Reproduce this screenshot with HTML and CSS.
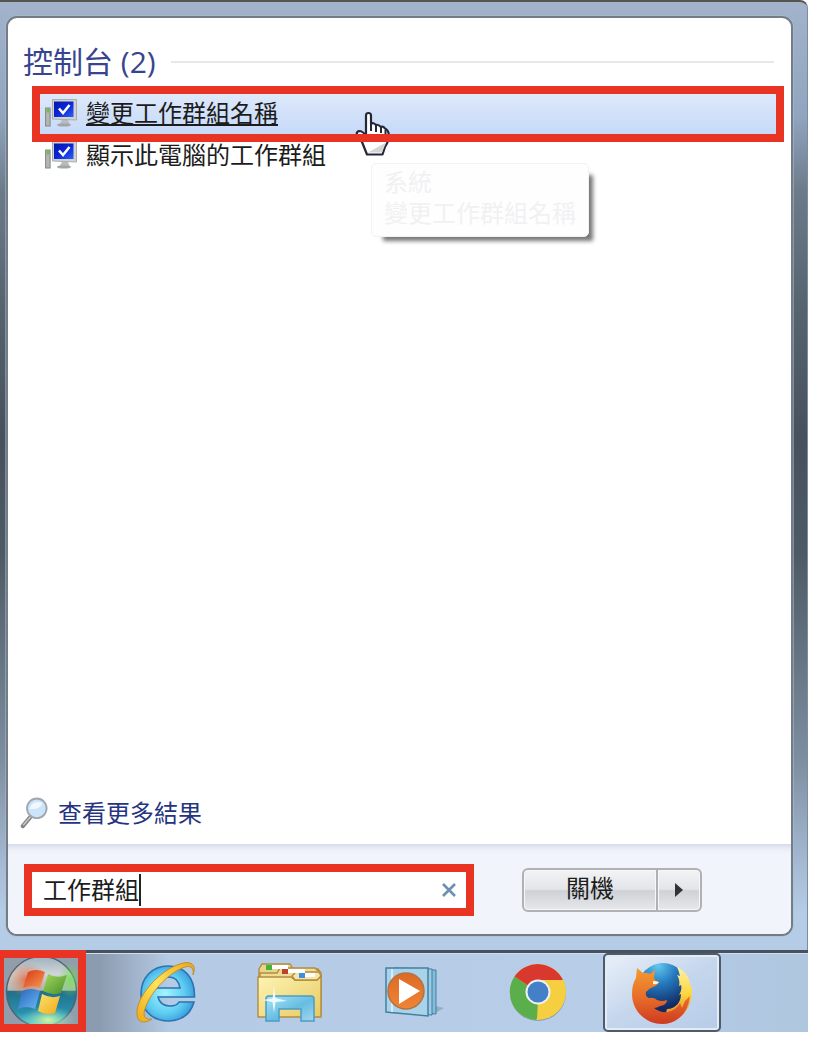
FILE: index.html
```html
<!DOCTYPE html>
<html lang="zh-Hant">
<head>
<meta charset="utf-8">
<meta name="viewport" content="width=device-width, initial-scale=1">
<title>控制台</title>
<link rel="stylesheet" href="styles.css">
</head>
<body>
<svg class="defs" width="0" height="0" aria-hidden="true">
  <defs>
    <linearGradient id="screen" x1="0" y1="0" x2="1" y2="1"><stop offset="0" stop-color="#0419a8"/><stop offset=".5" stop-color="#0a25d8"/><stop offset="1" stop-color="#2e62f2"/></linearGradient>
    <symbol id="computer" viewBox="0 0 32 28">
      <rect x=".6" y="9" width="4.500" height="18" fill="#b5b5b5" stroke="#858585"/>
      <rect x="1.500" y="10" width="2.800" height="3.500" fill="#62c83c"/>
      <path d="M17 21h6l2 5H14z" fill="#b9bcbd"/>
      <ellipse cx="19" cy="26" rx="7" ry="1.600" fill="#a2a5a6"/>
      <path d="M7.500 .5H31.500v20.500L7.500 20z" fill="#d0d3d2" stroke="#a9adae"/>
      <path d="M9 2.500H28.500v15.500H9z" fill="url(#screen)"/>
      <path d="M14 9.500l4 4.500L24.500 6" fill="none" stroke="#fff" stroke-width="2.500"/>
    </symbol>
  </defs>
</svg>
<div class="desktop">
  <main class="menu">
    <div class="panel">
      <section class="results">
        <h1 class="heading">控制台 (2)</h1>
        <ul class="list">
          <li class="item item-active">
            <a class="entry" href="#"><svg class="pc" aria-hidden="true"><use href="#computer"/></svg><span>變更工作群組名稱</span></a>
            <svg class="cursor" viewBox="0 0 36 46" aria-hidden="true">
              <path d="M11 25V4.500Q11 2 13.500 2T16 4.500V13q2-2 5 1 2-1 5 2 2-1 4 1.500 3 1 4 6.500 0 6-4 12l-2.500 7.500H12L7 31 2 24q-1-3 2-4 4 0 7 5z" fill="#fff" stroke="#252838" stroke-width="2.200" stroke-linejoin="round"/>
              <path d="M16 12v8M21 14v7M26 16v6M30.500 19v5" stroke="#252838" stroke-width="2"/>
              <path d="M13 41.500h14l4-10z" fill="#d5d5d5"/>
            </svg>
            <div class="tip" role="tooltip"><div>系統</div><div>變更工作群組名稱</div></div>
          </li>
          <li class="item">
            <a class="entry" href="#"><svg class="pc" aria-hidden="true"><use href="#computer"/></svg><span>顯示此電腦的工作群組</span></a>
          </li>
        </ul>
        <a class="more" href="#">
          <svg class="lens" viewBox="0 0 30 34" aria-hidden="true">
            <path d="M3 31L13 19" stroke="#858585" stroke-width="4.500" stroke-linecap="round"/>
            <path d="M3.500 30L13 19" stroke="#ccc" stroke-width="1.600"/>
            <circle cx="18" cy="12" r="10.500" fill="#cce4f9" stroke="#a1a7ad" stroke-width="2"/>
            <path d="M10 13q3-10 14-7-1 7-14 7z" fill="#f0f8ff"/>
          </svg>
          <span>查看更多結果</span>
        </a>
      </section>
      <footer class="foot">
        <form class="search">
          <input class="query" type="text" value="工作群組" aria-label="搜尋">
          <span class="caret"></span>
          <button class="clear" type="reset" aria-label="清除">
            <svg viewBox="0 0 16 16" width="16" height="16"><path d="M2 2l12 12M14 2L2 14" stroke="#6d8fb2" stroke-width="2.600"/></svg>
          </button>
        </form>
        <div class="power">
          <button class="shut" type="button">關機</button>
          <button class="arrow" type="button" aria-label="更多選項"><svg viewBox="0 0 8 14" width="8" height="14"><path d="M0 0l8 7-8 7z" fill="#333"/></svg></button>
        </div>
      </footer>
    </div>
  </main>
  <nav class="taskbar">
    <button class="start" type="button" aria-label="開始">
      <svg class="orb" viewBox="0 0 74 66" preserveAspectRatio="xMidYMid slice">
        <defs>
          <linearGradient id="orbTop" x1="0" y1="0" x2="0" y2="1"><stop offset="0" stop-color="#9db0be"/><stop offset=".25" stop-color="#d0d6d8"/><stop offset=".48" stop-color="#b0b9b4"/><stop offset=".5" stop-color="#216f8b"/><stop offset=".8" stop-color="#2990ad"/><stop offset="1" stop-color="#6cd4d8"/></linearGradient>
          <radialGradient id="orbWarm"><stop offset="0" stop-color="#e8562c"/><stop offset="1" stop-color="#e87b4c" stop-opacity="0"/></radialGradient>
          <radialGradient id="orbGreen"><stop offset="0" stop-color="#6be04a"/><stop offset="1" stop-color="#7ad45a" stop-opacity="0"/></radialGradient>
          <radialGradient id="orbGlow"><stop offset="0" stop-color="#d6f59c"/><stop offset="1" stop-color="#6fe0d0" stop-opacity="0"/></radialGradient>
          <linearGradient id="flagR" x1="0" y1="0" x2="1" y2="1"><stop offset="0" stop-color="#d8360f"/><stop offset="1" stop-color="#f79a58"/></linearGradient>
          <linearGradient id="flagG" x1="0" y1="0" x2="1" y2="1"><stop offset="0" stop-color="#a8d860"/><stop offset="1" stop-color="#44902a"/></linearGradient>
          <linearGradient id="flagB" x1="0" y1="0" x2="1" y2="1"><stop offset="0" stop-color="#2564bd"/><stop offset="1" stop-color="#6db9f2"/></linearGradient>
          <linearGradient id="flagY" x1="0" y1="0" x2="1" y2="1"><stop offset="0" stop-color="#fbe36c"/><stop offset="1" stop-color="#f2a91c"/></linearGradient>
        </defs>
        <rect width="74" height="66" fill="#929dab"/>
        <circle cx="37.500" cy="33.500" r="35" fill="url(#orbTop)" stroke="#4f6472" stroke-width="1.500"/>
        <ellipse cx="23" cy="22" rx="20" ry="18" fill="url(#orbWarm)" opacity=".8"/>
        <ellipse cx="66" cy="22" rx="12" ry="18" fill="url(#orbGreen)" opacity=".8"/>
        <ellipse cx="44" cy="62" rx="28" ry="14" fill="url(#orbGlow)"/>
        <path d="M24 14q8-4 17 0l-5 16q-8-4-17 0z" fill="url(#flagR)"/>
        <path d="M44 16q9 5 19 1l-6 18q-9 3-18-2z" fill="url(#flagG)"/>
        <path d="M18 33q9-4 18 0l-5 18q-9-4-17 0z" fill="url(#flagB)"/>
        <path d="M38 36q9 5 18 2l-5 17q-9 3-17-2z" fill="url(#flagY)"/>
      </svg>
    </button>
    <button class="app" type="button" aria-label="Internet Explorer">
      <svg viewBox="0 0 60 62" width="60" height="62">
        <defs><radialGradient id="ie" cx=".45" cy=".5" r=".6"><stop offset="0" stop-color="#a5f4fd"/><stop offset=".6" stop-color="#5fcdf2"/><stop offset="1" stop-color="#3294d6"/></radialGradient>
        <linearGradient id="ieRing" x1="0" y1="1" x2="1" y2="0"><stop offset="0" stop-color="#f0a91a"/><stop offset=".5" stop-color="#ffe45a"/><stop offset="1" stop-color="#eba51c"/></linearGradient></defs>
        <path fill-rule="evenodd" d="M32 5C48 5 59 16 58.500 36H22q2 9 12 9 7 0 9-4h15q-5 18-25 19C16 60 5 49 5 33S16 5 32 5zM21 27h23q-2-11-11-11-10 0-12 11z" fill="url(#ie)" stroke="#2a73b4" stroke-width="1.600"/>
        <path d="M57 14C61 4 55-1 44 3 24 9-1 36 1 54c1 9 9 8 15 4-8 1-10-3-6-13C17 28 34 11 49 6c7-2 9 2 8 8z" fill="url(#ieRing)" stroke="#bd902d" stroke-width="1"/>
      </svg>
    </button>
    <button class="app" type="button" aria-label="檔案總管">
      <svg viewBox="0 0 66 60" width="66" height="60">
        <defs><linearGradient id="folder" x1="0" y1="0" x2="1" y2="1"><stop offset="0" stop-color="#fdf4b5"/><stop offset="1" stop-color="#e7ca60"/></linearGradient>
        <linearGradient id="stand" x1="0" y1="0" x2="1" y2="1"><stop offset="0" stop-color="#a8e5f5"/><stop offset=".55" stop-color="#65bde2"/><stop offset="1" stop-color="#a5d6ed"/></linearGradient></defs>
        <g stroke="#b28c42" stroke-width="1.400">
          <path d="M2 54V7l3-5h28l3 5h25l3 4v42z" fill="#ead487"/>
          <path d="M3 54V11h17l3-5h35l4 4v43z" fill="#f0dc91"/>
          <path d="M1 55V15h33l4 3h22l4-4v41z" fill="url(#folder)"/>
          <path d="M35 14l4-4h23l2 4-4 4H38z" fill="#f5e6a5"/>
        </g>
        <path d="M9 3h22v4H9zM26 7h22v4H26zM42 11h16v4H42z" fill="#fff"/>
        <path d="M9 3h6v5H9z" fill="#38b83c"/><path d="M25 7h6v5h-6z" fill="#bd4130"/><path d="M42 11h6v5h-6z" fill="#3b8fdb"/>
        <path d="M9 59V37q0-3 3-3h42q3 0 3 3v22H44V47H22v12z" fill="url(#stand)" stroke="#4b9cc8" stroke-width="1.500"/>
        <path d="M17 24l1.500 12L30 39l-11.500 1L17 51l-1.500-11L5 38l10.500-1.500z" fill="#fff" opacity=".85"/>
      </svg>
    </button>
    <button class="app" type="button" aria-label="Windows Media Player">
      <svg viewBox="0 0 60 52" width="60" height="52">
        <defs><linearGradient id="play" x1="0" y1="0" x2="0" y2="1"><stop offset="0" stop-color="#dc6a26"/><stop offset="1" stop-color="#f18436"/></linearGradient></defs>
        <path d="M46 50l14-8-8-2z" fill="#7f98b3" opacity=".6"/>
        <path d="M16 3l36 1v44l-36-3z" fill="#84bcd9" stroke="#43809f"/>
        <path d="M10 2l38 1v46l-38-3z" fill="#9ccbe3" stroke="#43809f"/>
        <path d="M2 2h42v48L2 46z" fill="#a9d3ea" stroke="#43809f" stroke-width="1.500"/>
        <path d="M8 3v43" stroke="#d5edf8" stroke-width="2"/>
        <circle cx="22" cy="25" r="18" fill="url(#play)" stroke="#b27344" stroke-width="1.500"/>
        <path d="M15 13l21 12-21 13z" fill="#fff"/>
      </svg>
    </button>
    <button class="app" type="button" aria-label="Chrome">
      <svg viewBox="0 0 58 58" width="58" height="58">
        <circle cx="29" cy="30" r="28" fill="#849bb4"/>
        <circle cx="29" cy="29" r="28" fill="#f6cf40"/>
        <path d="M29 29L5.500 13.500A28 28 0 0 0 27 57L40 35z" fill="#5aae4c"/>
        <path d="M29 29L5.500 13.500A28 28 0 0 1 54 17H29L18 35z" fill="#d8382e"/>
        <path d="M28 57l12-21H29z" fill="#f6cf40"/>
        <circle cx="29" cy="29" r="12.500" fill="#eef2f5"/><circle cx="29" cy="29" r="10.500" fill="#4380c8"/>
      </svg>
    </button>
    <button class="app app-open" type="button" aria-label="Firefox">
      <svg viewBox="0 0 62 62" width="62" height="62">
        <defs><radialGradient id="globe" cx=".4" cy=".05" r=".85"><stop offset="0" stop-color="#62c8f0"/><stop offset=".45" stop-color="#2478bd"/><stop offset="1" stop-color="#122a63"/></radialGradient>
        <linearGradient id="fox" x1="0" y1="0" x2="0" y2="1"><stop offset="0" stop-color="#f39a32"/><stop offset=".5" stop-color="#e8702a"/><stop offset="1" stop-color="#cf3a20"/></linearGradient>
        <linearGradient id="tail" x1="0" y1="0" x2="0" y2="1"><stop offset="0" stop-color="#fff2a6"/><stop offset=".5" stop-color="#fbd43c"/><stop offset="1" stop-color="#e56722"/></linearGradient></defs>
        <circle cx="32" cy="26" r="25" fill="url(#globe)"/>
        <path d="M46 5c8 4 13 11 13 18l2 3c1 19-11 35-29 35l4-14c9 0 14-7 14-15l-2 1c2-3 3-7 2-10l-2 1c1-4 0-8-2-11l3 1q-1-5-3-9z" fill="url(#tail)"/>
        <path d="M5 16L6 6l6 5q4-1 7 1l5-4-1 8q1 3 5 4-1 3-6 5-5 2-7 5-1 5 3 6 5-1 8 2 5 2 10 0 0 5-7 6-3 2-6 2 6 5 14 4 8-2 12-9l2 5 3-7 5-5q-2 15-11 22-7 6-17 6C15 62 1 49 1 32q0-10 4-16z" fill="url(#fox)"/>
        <path d="M22 19q3 0 6 1-2 3-6 2z" fill="#fff3d5"/>
      </svg>
    </button>
  </nav>
</div>
</body>
</html>
```

FILE: styles.css
```css
* { box-sizing: border-box; }

body {
  margin: 0;
  background: #fff;
  color: #1c1c1c;
  font: 24px/32px "Open Sans", "Noto Sans CJK TC", sans-serif;
}

button, input { font: inherit; color: inherit; }
a { color: inherit; text-decoration: none; }
.defs { position: absolute; }

.desktop {
  display: flex;
  flex-direction: column;
  min-height: 100vh;
  padding: 0 30px 6px 0;
}

.menu {
  display: flex;
  flex: 1;
  padding: 14px 14px 14px 6px;
  border-top: 2px solid #55564f;
  border-right: 1px solid #7c8da0;
  border-top-right-radius: 8px;
  background: linear-gradient(#a2b3cb 0, #91a5c0 12%, #6c7b89 20%, #566470 32%, #47515d 46%, #4d5a65 58%, #7d8ea0 80%, #a5bad3 91%, #b5cce6 96%);
}

.panel {
  display: flex;
  flex: 1;
  flex-direction: column;
  min-width: 0;
  border: 2px solid #737d88;
  border-radius: 11px;
  background: #fff;
  box-shadow: 0 0 0 1px #b0bdcd88;
}

.results {
  display: flex;
  flex: 1;
  flex-direction: column;
  padding: 24px 7px 14px 15px;
}

.heading {
  display: flex;
  align-items: center;
  gap: 15px;
  margin: 0;
  padding-right: 10px;
  color: #37458f;
  font-size: 30px;
  font-weight: 400;
  line-height: 40px;
}
.heading::after {
  content: "";
  flex: 1;
  height: 2px;
  background: #e8e8e8;
}

.list {
  margin: 4px 0 auto;
  padding: 0 0 0 9px;
  list-style: none;
}
.item { padding: 0 13px; }
.item-active {
  position: relative;
  padding: 11px 13px 13px;
  background: linear-gradient(#e2ebfb, #c1d7f8);
}
.item-active::after {
  content: "";
  position: absolute;
  inset: 0;
  border: 8px solid #e93323;
  pointer-events: none;
}
.item-active span { text-decoration: underline; text-decoration-thickness: 2px; text-underline-offset: 2px; }
.entry { display: flex; align-items: center; gap: 9px; height: 26px; }
.entry .pc { flex: none; width: 32px; height: 28px; }
.item-active .entry { height: 32px; }

.cursor {
  position: absolute;
  top: 25px;
  left: 323px;
  width: 36px;
  height: 46px;
}
.tip {
  position: absolute;
  top: 77px;
  left: 339px;
  padding: 2px 12px 8px;
  border: 1px solid #f3f3f5;
  border-radius: 5px;
  background: #fefefe;
  box-shadow: 8px 8px 4px -4px #777;
  color: #f1f1f3;
  line-height: 31px;
}

.more {
  display: flex;
  align-items: center;
  align-self: flex-start;
  gap: 10px;
  color: #25347f;
}
.lens { width: 28px; height: 34px; margin-left: -3px; }

.foot {
  display: flex;
  gap: 48px;
  padding: 20px 16px 18px;
  border-radius: 0 0 9px 9px;
  background: linear-gradient(#d5dbea 0, #eaeef6 5px, #f1f4fa 10px);
}
.search {
  display: flex;
  flex: 0 1 450px;
  align-items: center;
  height: 52px;
  padding: 0 4px 0 11px;
  border: 8px solid #e93323;
  background: #fff;
}
.query {
  width: 96px;
  height: 32px;
  padding: 0;
  border: 0;
  outline: 0;
  background: none;
}
.caret { width: 2px; height: 32px; background: #222; }
.clear {
  display: flex;
  margin-left: auto;
  padding: 5px;
  border: 0;
  background: none;
}

.power { display: flex; height: 44px; margin-top: 4px; }
.shut, .arrow {
  padding: 0;
  border: 2px solid #b0b1b5;
  background: linear-gradient(#f2f3f5 0, #e4e5e9 48%, #cfd1d6 52%, #e6e8ec 100%);
  box-shadow: inset 0 0 0 1px #f7f7f9;
}
.shut { width: 136px; padding-bottom: 4px; border-radius: 6px 0 0 6px; line-height: 34px; }
.arrow {
  display: flex;
  align-items: center;
  justify-content: center;
  width: 46px;
  margin-left: -2px;
  border-radius: 0 6px 6px 0;
}

.taskbar {
  display: flex;
  height: 82px;
  background: linear-gradient(90deg, #8c9cb0 0, #8c9cb0 100px, #b5cbe5 170px, #b7cde8 75%, #afc6df 100%);
  box-shadow: inset 0 3px #47525e, inset 0 4px #cfdeef;
}
.start {
  flex: none;
  width: 86px;
  margin-right: 18px;
  padding: 0;
  border: solid #e93323;
  border-width: 8px 8px 8px 4px;
}
.orb { display: block; width: 100%; height: 100%; }
.app {
  display: flex;
  flex: 0 1 124px;
  align-items: center;
  justify-content: center;
  min-width: 0;
  padding: 2px 0 0;
  border: 0;
  background: none;
}
.app-open {
  flex-basis: 118px;
  margin: 3px 3px 0;
  padding: 0;
  border: 2px solid #4e5b69;
  border-radius: 5px;
  background: linear-gradient(150deg, #e9f0f9, #c5d6ec 50%, #b6cce8);
  box-shadow: inset 0 0 0 2px #e2ebf6;
}
```
